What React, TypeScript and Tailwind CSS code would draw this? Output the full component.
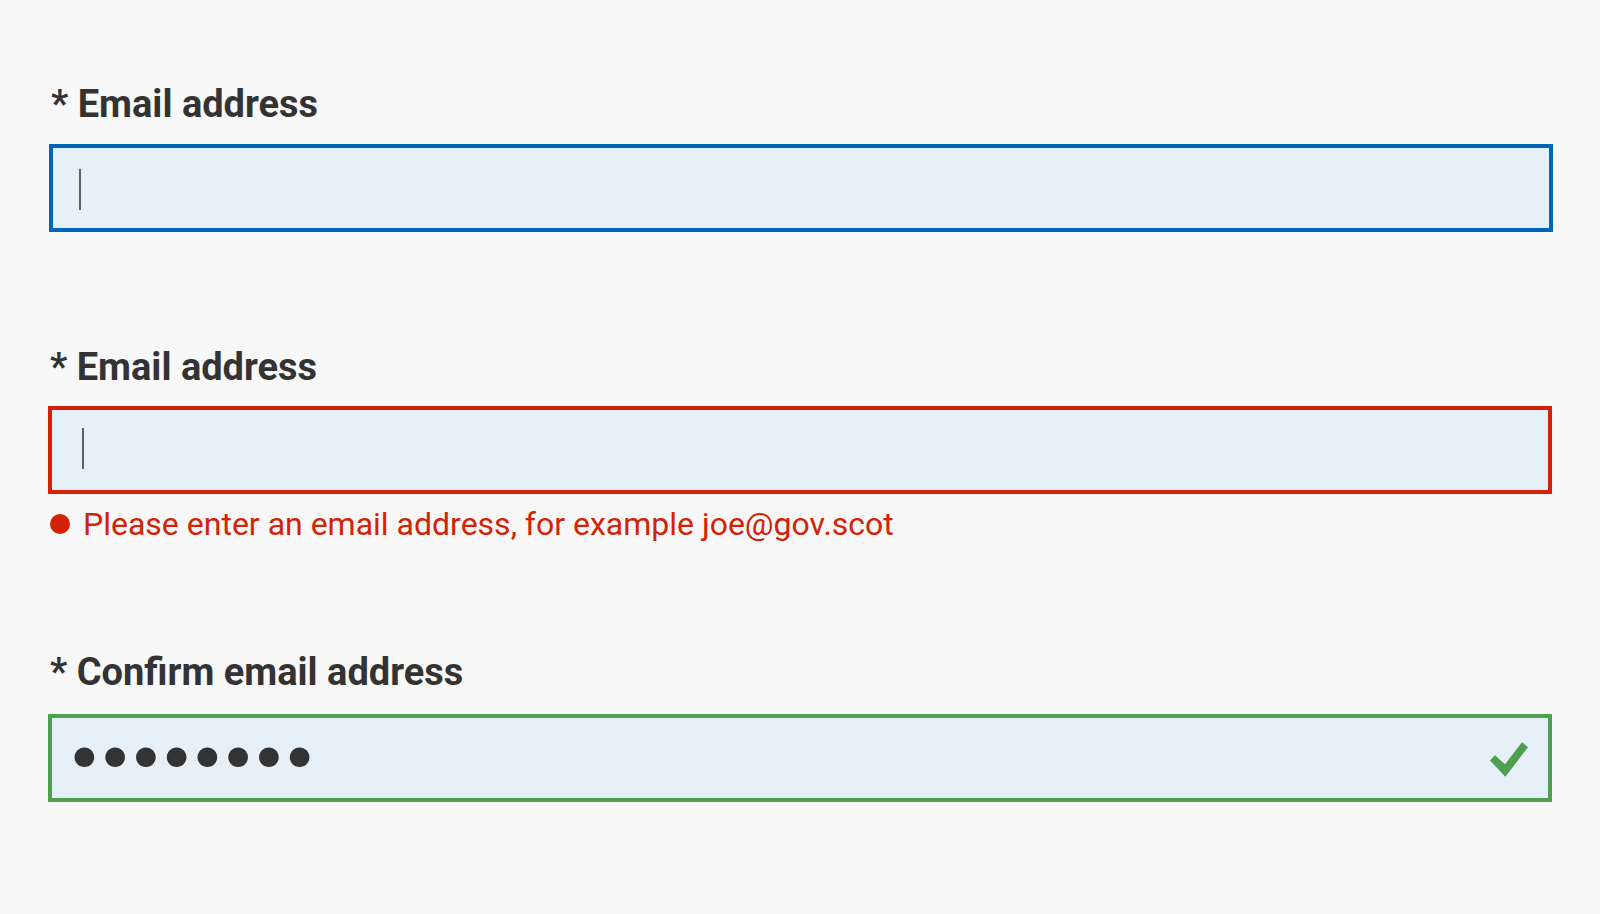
import { useState } from "react";

type Status = "focused" | "error" | "valid";

type FieldProps = {
  id: string;
  label: string;
  status: Status;
  type: "email" | "password";
  initialValue?: string;
  error?: string;
};

const borders: Record<Status, string> = {
  focused: "border-[#0065bd]",
  error: "border-[#d32205]",
  valid: "border-[#4f9f51]",
};

const spacing: Record<Status, string> = {
  focused: "gap-4 pl-px",
  error: "gap-[15px] pr-px",
  valid: "gap-[18px] pr-px",
};

const carets: Record<Status, string> = {
  focused: "left-[30px] top-[25px]",
  error: "left-[34px] top-[22px]",
  valid: "hidden",
};

function Tick() {
  return (
    <svg
      viewBox="0 0 38 35"
      className="pointer-events-none absolute top-7 right-6 h-[35px] w-[38px]"
      fill="#4f9f51"
      aria-hidden="true"
    >
      <path d="M0 18.5 5 13.3 15 22.3 32 .3 38 5.2 15.4 34.8Z" />
    </svg>
  );
}

function Field({ id, label, status, type, initialValue = "", error }: FieldProps) {
  const [value, setValue] = useState(initialValue);
  return (
    <div>
      <div className={`flex flex-col ${spacing[status]}`}>
        <label htmlFor={id} className="pl-0.5 text-[38px] leading-[48px] font-bold">
          * {label}
        </label>
        <div className="relative">
          <input
            id={id}
            type={type}
            value={value}
            onChange={(e) => setValue(e.target.value)}
            required
            aria-invalid={status === "error"}
            aria-describedby={error ? `${id}-error` : undefined}
            className={`block h-22 w-full border-4 bg-[#e5f0f9] pr-20 pl-[17px] outline-none ${borders[status]} ${
              type === "password" ? "pb-3 font-['Lato',sans-serif] text-[53px]" : "text-[32px]"
            }`}
          />
          {value === "" && (
            <span
              className={`pointer-events-none absolute h-[41px] w-0.5 bg-[#5c6265] ${carets[status]}`}
            />
          )}
          {status === "valid" && <Tick />}
        </div>
      </div>
      {error && (
        <p
          id={`${id}-error`}
          className="mt-2.5 flex items-center gap-[13px] pl-0.5 text-[32px] leading-[40px] text-[#d32205]"
        >
          <span className="size-5 shrink-0 rounded-full bg-[#d32205]" />
          {error}
        </p>
      )}
    </div>
  );
}

export default function App() {
  return (
    <main className="min-h-screen bg-[#f8f8f8] px-12 pt-20 pb-28 font-['Roboto',sans-serif] text-[#333333]">
      <form className="-mr-px" noValidate>
        <div className="mb-[111px]">
          <Field id="email" label="Email address" status="focused" type="email" />
        </div>
        <div className="mb-[104px]">
          <Field
            id="email-invalid"
            label="Email address"
            status="error"
            type="email"
            error="Please enter an email address, for example joe@gov.scot"
          />
        </div>
        <Field
          id="confirm-email"
          label="Confirm email address"
          status="valid"
          type="password"
          initialValue="joe@gov."
        />
      </form>
    </main>
  );
}
